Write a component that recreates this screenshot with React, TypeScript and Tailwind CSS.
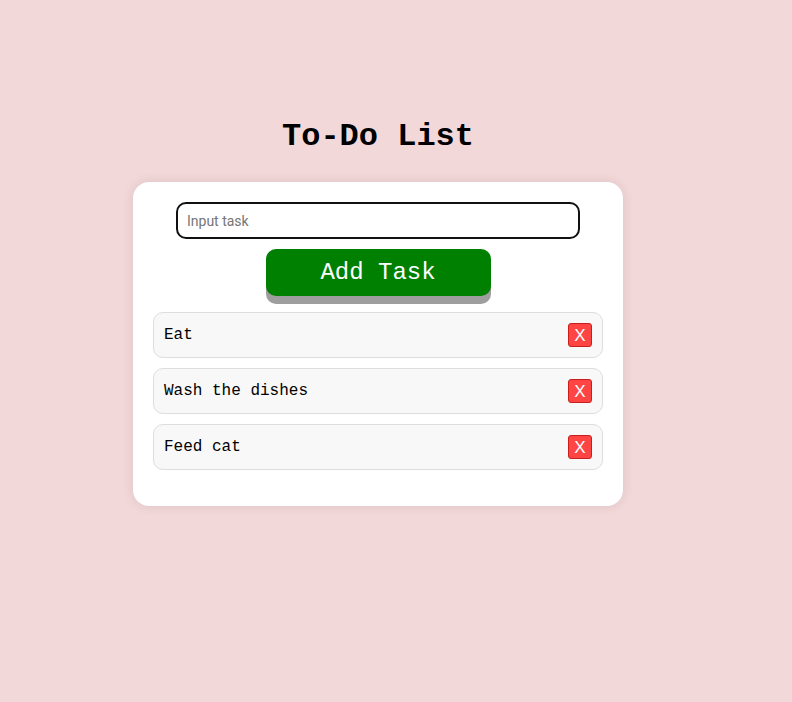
import React, { useState } from "react";

const mono = "font-['Liberation_Mono','Courier_New',monospace]";

export default function App() {
  const [tasks, setTasks] = useState<string[]>(["Eat", "Wash the dishes", "Feed cat"]);
  const [text, setText] = useState("");

  const addTask = () => {
    if (text.trim()) {
      setTasks([...tasks, text.trim()]);
      setText("");
    }
  };

  return (
    <main className="min-h-[702px] w-full bg-[#f3d8d9]">
      <div className="w-[756px] flex flex-col items-center pt-[118px]">
        <h1 className={`${mono} text-[32px] leading-[38px] font-bold text-black`}>To-Do List</h1>
        <div className="mt-[26px] w-[490px] bg-white rounded-[16px] shadow-[0_0_12px_rgba(0,0,0,0.1)] px-[20px] pt-[20px] pb-[36px] flex flex-col items-center">
          <input
            value={text}
            onChange={(e) => setText(e.target.value)}
            placeholder="Input task"
            className="w-[404px] h-[37px] border-2 border-[#111] rounded-[10px] px-[9px] text-[14px] font-['Roboto',sans-serif] text-black placeholder:text-[#757575] outline-none"
          />
          <button
            onClick={addTask}
            className={`${mono} mt-[10px] w-[225px] h-[47px] bg-[#008000] text-white text-[24px] rounded-[10px] shadow-[0_8px_0_#9e9e9e]`}
          >
            Add Task
          </button>
          <ul className="mt-[16px] w-[450px] flex flex-col gap-[10px]">
            {tasks.map((t, i) => (
              <li
                key={i}
                className="h-[46px] bg-[#f8f8f8] border border-[#dddddd] rounded-[10px] pl-[10px] pr-[10px] flex items-center justify-between"
              >
                <span className={`${mono} text-[16px] text-black`}>{t}</span>
                <button
                  onClick={() => setTasks(tasks.filter((_, j) => j !== i))}
                  className="w-[24px] h-[24px] bg-[#ff4444] border border-[#c81e1e] rounded-[3px] text-white text-[17px] leading-none font-['Liberation_Sans',Arial,sans-serif] flex items-center justify-center"
                >
                  X
                </button>
              </li>
            ))}
          </ul>
        </div>
      </div>
    </main>
  );
}
